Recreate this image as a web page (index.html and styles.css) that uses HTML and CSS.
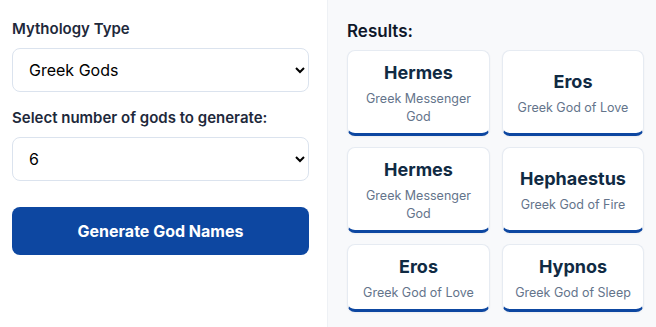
FILE: index.html
```html
<!DOCTYPE html>
<html>
<head>
<meta charset="utf-8">
<link rel="stylesheet" href="styles.css">
</head>
<body>
<div class="layout">
  <div class="controls">
    <label class="label" for="myth">Mythology Type</label>
    <select id="myth" class="select">
      <option>Greek Gods</option>
    </select>
    <label class="label label-second" for="count">Select number of gods to generate:</label>
    <select id="count" class="select">
      <option>6</option>
    </select>
    <button class="btn">Generate God Names</button>
  </div>
  <div class="results">
    <h2 class="results-title">Results:</h2>
    <div class="grid">
      <div class="card"><div class="name">Hermes</div><div class="desc">Greek Messenger God</div></div>
      <div class="card"><div class="name">Eros</div><div class="desc">Greek God of Love</div></div>
      <div class="card"><div class="name">Hermes</div><div class="desc">Greek Messenger God</div></div>
      <div class="card"><div class="name">Hephaestus</div><div class="desc">Greek God of Fire</div></div>
      <div class="card"><div class="name">Eros</div><div class="desc">Greek God of Love</div></div>
      <div class="card"><div class="name">Hypnos</div><div class="desc">Greek God of Sleep</div></div>
    </div>
  </div>
</div>
</body>
</html>
```

FILE: styles.css
```css
* { box-sizing: border-box; }
html, body { margin: 0; padding: 0; }
body {
  font-family: Inter, "Noto Sans", sans-serif;
  background: #ffffff;
  width: 656px;
  height: 327px;
  overflow: hidden;
}
.layout {
  display: grid;
  grid-template-columns: 328px 328px;
  height: 327px;
}
.controls {
  display: flex;
  flex-direction: column;
  padding: 19px 18px 0 12px;
  border-right: 1px solid #eef1f5;
  background: #ffffff;
}
.label {
  font-size: 15px;
  line-height: 20px;
  font-weight: 600;
  color: #1e293b;
  margin-bottom: 9px;
}
.label-second { margin-top: 16px; }
.select {
  height: 44px;
  width: 100%;
  border: 1px solid #dbe3ee;
  border-radius: 8px;
  background: #ffffff;
  padding: 0 10px 0 12px;
  font-family: Inter, "Noto Sans", sans-serif;
  font-size: 16px;
  color: #000000;
}
.btn {
  margin-top: 26px;
  height: 48px;
  width: 100%;
  border: none;
  border-radius: 8px;
  background: #0d47a1;
  color: #ffffff;
  font-family: Inter, "Noto Sans", sans-serif;
  font-size: 16px;
  font-weight: 700;
}
.results {
  background: #f8f9fb;
  padding: 19px 12px 0 19px;
}
.results-title {
  margin: 0 0 7px;
  font-size: 17px;
  line-height: 24px;
  font-weight: 600;
  color: #0f172a;
}
.grid {
  display: grid;
  grid-template-columns: 143px 142px;
  column-gap: 12px;
  row-gap: 11px;
}
.card {
  display: flex;
  flex-direction: column;
  justify-content: center;
  text-align: center;
  background: #ffffff;
  border: 1px solid #e6ebf2;
  border-bottom: 3px solid #0d47a1;
  border-radius: 8px;
  padding: 11px 8px 7px;
  box-shadow: 0 1px 2px rgba(15, 23, 42, 0.05);
}
.name {
  font-size: 18px;
  line-height: 22px;
  font-weight: 700;
  color: #102a43;
}
.desc {
  margin-top: 6px;
  font-size: 12.5px;
  line-height: 18px;
  color: #64748b;
}
```
